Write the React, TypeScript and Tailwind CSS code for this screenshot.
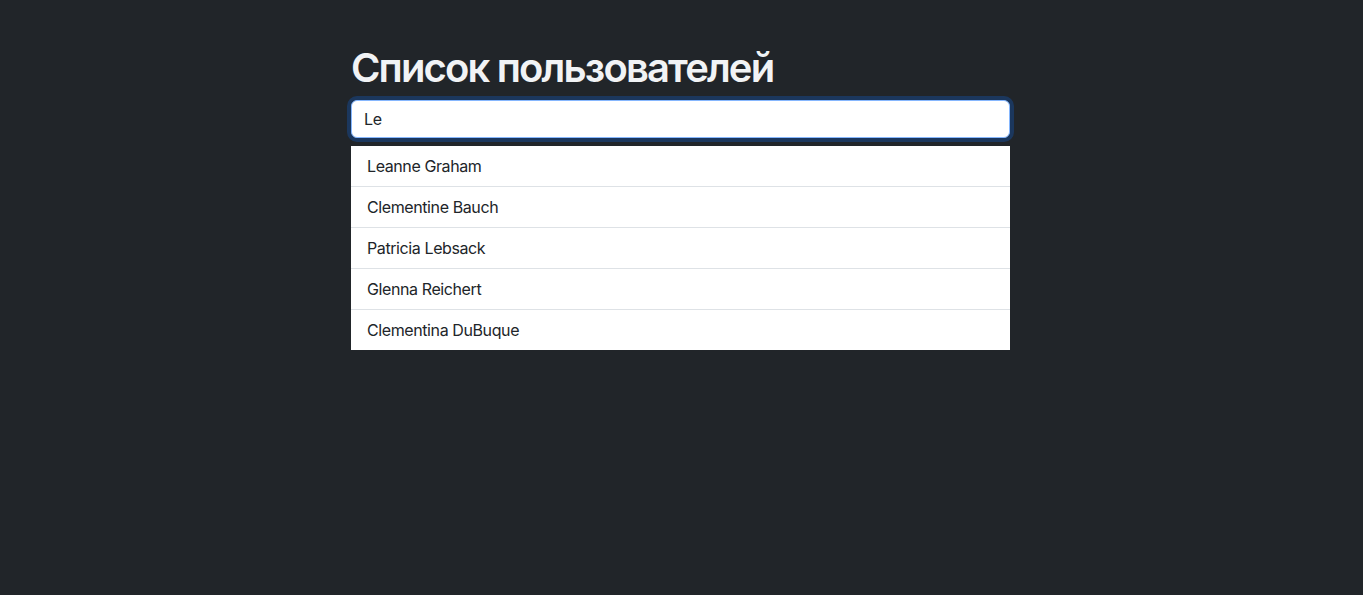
import React from "react";

const users = [
  "Leanne Graham",
  "Clementine Bauch",
  "Patricia Lebsack",
  "Glenna Reichert",
  "Clementina DuBuque",
];

export default function App() {
  return (
    <div
      className="min-h-[595px] w-full bg-[#212529] pt-[44px]"
      style={{ fontFamily: "Inter, 'Noto Sans', 'Liberation Sans', sans-serif" }}
    >
      <div className="ml-[351px] w-[659px]">
        <h1 className="mb-2 text-[40px] font-semibold leading-[48px] tracking-[-1.85px] text-[#f1f3f5]">
          Список пользователей
        </h1>
        <input
          readOnly
          value="Le"
          className="block h-[38px] w-full rounded-[6px] border border-[#86b7fe] bg-white px-3 text-[16px] tracking-[-0.3px] text-[#212529] shadow-[0_0_0_4px_rgba(13,110,253,0.25)] outline-none"
        />
        <ul className="mt-2 bg-white">
          {users.map((u, i) => (
            <li
              key={u}
              className={`px-4 py-2 text-[16px] leading-6 tracking-[-0.4px] text-[#212529] ${
                i < users.length - 1 ? "border-b border-[#dee2e6]" : ""
              }`}
            >
              {u}
            </li>
          ))}
        </ul>
      </div>
    </div>
  );
}
